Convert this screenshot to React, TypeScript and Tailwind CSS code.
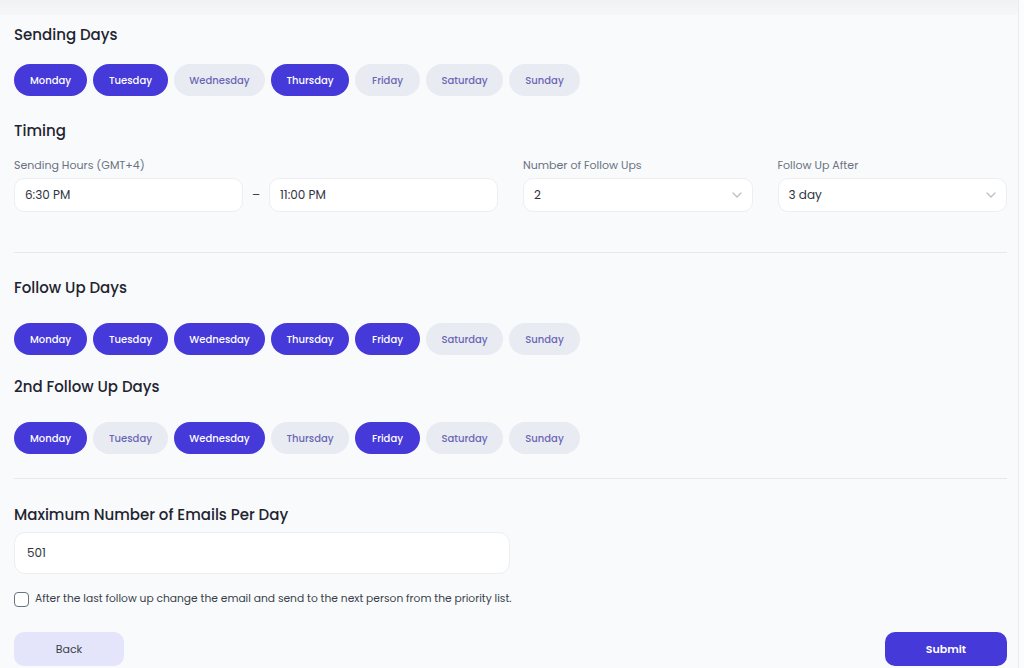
import React from "react";

const DAYS = ["Monday", "Tuesday", "Wednesday", "Thursday", "Friday", "Saturday", "Sunday"];
const WIDTHS: Record<string, string> = {
  Monday: "w-[73px]",
  Tuesday: "w-[75px]",
  Wednesday: "w-[91px]",
  Thursday: "w-[78px]",
  Friday: "w-[65px]",
  Saturday: "w-[77px]",
  Sunday: "w-[71px]",
};

function DayPills({ active }: { active: string[] }) {
  return (
    <div className="flex gap-[6px]">
      {DAYS.map((d) => {
        const on = active.includes(d);
        return (
          <button
            key={d}
            className={
              "h-[32px] rounded-full text-[10px] font-medium flex items-center justify-center " +
              WIDTHS[d] +
              " " +
              (on ? "bg-[#4639d9] text-white" : "bg-[#e9ebf2] text-[#6a66b5]")
            }
          >
            {d}
          </button>
        );
      })}
    </div>
  );
}

function Heading({ children, className = "" }: { children: React.ReactNode; className?: string }) {
  return <h2 className={"text-[15px] leading-[22px] font-medium text-[#1f2430] " + className}>{children}</h2>;
}

function Chevron() {
  return (
    <svg width="10" height="6" viewBox="0 0 10 6" fill="none" className="text-[#b9bdc6]">
      <path d="M1 1l4 4 4-4" stroke="currentColor" strokeWidth="1.2" strokeLinecap="round" strokeLinejoin="round" />
    </svg>
  );
}

export default function App() {
  return (
    <div
      className="w-[1024px] h-[668px] overflow-hidden bg-[#fbfcfd] flex"
      style={{ fontFamily: "Poppins, Inter, 'Noto Sans', sans-serif" }}
    >
      <div className="w-[1019px] h-full bg-[#f8fafc] border-r border-[#e9ebef] flex flex-col">
        <div className="h-[15px] bg-gradient-to-b from-[#f1f2f4] to-[#f6f7f9] shrink-0" />
        <div className="pl-[14px] pr-[11px] flex flex-col">
          <Heading className="mt-[9px]">Sending Days</Heading>
          <div className="mt-[18px]">
            <DayPills active={["Monday", "Tuesday", "Thursday"]} />
          </div>

          <Heading className="mt-[24px]">Timing</Heading>
          <div className="mt-[15px] grid grid-cols-4 gap-x-[25px]">
            <div className="col-span-2 flex flex-col">
              <span className="text-[11px] leading-[16px] text-[#6b7280]">Sending Hours (GMT+4)</span>
              <div className="mt-[5px] flex items-center">
                <div className="flex-1 h-[34px] rounded-[10px] bg-white border border-[#eceef2] flex items-center px-[10px] text-[12px] text-[#2f3440]">
                  6:30 PM
                </div>
                <div className="w-[26px] flex justify-center text-[12px] text-[#3a3f4a]">–</div>
                <div className="flex-1 h-[34px] rounded-[10px] bg-white border border-[#eceef2] flex items-center px-[10px] text-[12px] text-[#2f3440]">
                  11:00 PM
                </div>
              </div>
            </div>
            <div className="flex flex-col">
              <span className="text-[11px] leading-[16px] text-[#6b7280]">Number of Follow Ups</span>
              <div className="mt-[5px] h-[34px] rounded-[10px] bg-white border border-[#eceef2] flex items-center justify-between px-[10px] text-[12px] text-[#2f3440]">
                <span>2</span>
                <Chevron />
              </div>
            </div>
            <div className="flex flex-col">
              <span className="text-[11px] leading-[16px] text-[#6b7280]">Follow Up After</span>
              <div className="mt-[5px] h-[34px] rounded-[10px] bg-white border border-[#eceef2] flex items-center justify-between px-[10px] text-[12px] text-[#2f3440]">
                <span>3 day</span>
                <Chevron />
              </div>
            </div>
          </div>

          <div className="mt-[40px] h-px bg-[#e6e8ec]" />

          <Heading className="mt-[24px]">Follow Up Days</Heading>
          <div className="mt-[24px]">
            <DayPills active={["Monday", "Tuesday", "Wednesday", "Thursday", "Friday"]} />
          </div>

          <Heading className="mt-[21px]">2nd Follow Up Days</Heading>
          <div className="mt-[24px]">
            <DayPills active={["Monday", "Wednesday", "Friday"]} />
          </div>

          <div className="mt-[24px] h-px bg-[#e6e8ec]" />

          <Heading className="mt-[25px]">Maximum Number of Emails Per Day</Heading>
          <div className="mt-[6px] w-[496px] h-[42px] rounded-[11px] bg-white border border-[#eceef2] flex items-center px-[12px] text-[12px] text-[#2f3440]">
            501
          </div>

          <label className="mt-[17px] flex items-center gap-[6px] h-[16px]">
            <span className="w-[15px] h-[15px] rounded-[4px] border border-[#6b7280] bg-white shrink-0" />
            <span className="text-[10.7px] text-[#3a3f4a]">
              After the last follow up change the email and send to the next person from the priority list.
            </span>
          </label>

          <div className="mt-[25px] flex justify-between">
            <button className="w-[110px] h-[34px] rounded-[10px] bg-[#e4e4fb] text-[11px] text-[#3a3f4a]">Back</button>
            <button className="w-[122px] h-[34px] rounded-[10px] bg-[#4639d9] text-[11px] font-semibold text-white">
              Submit
            </button>
          </div>
        </div>
      </div>
    </div>
  );
}
